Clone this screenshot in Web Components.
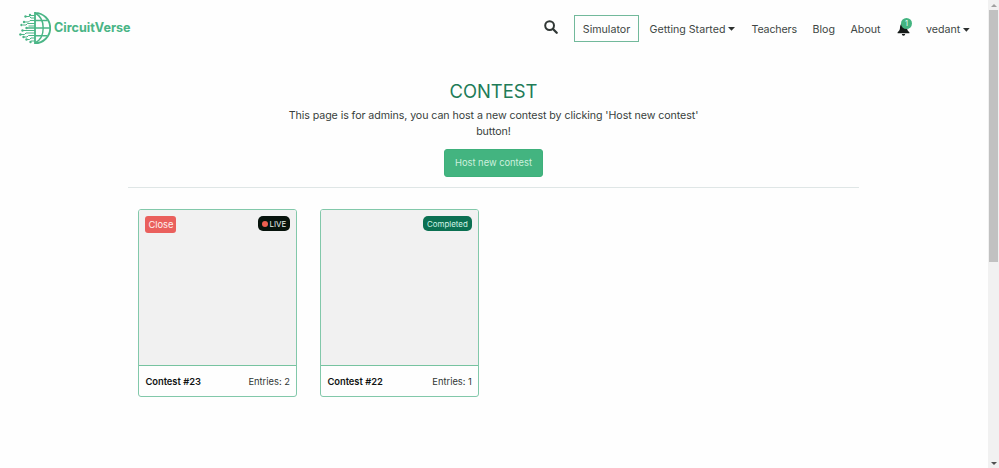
<!DOCTYPE html>
<html lang="en">
<head>
<meta charset="utf-8">
<title>CircuitVerse</title>
<style>
html,body{margin:0;height:100%;overflow:hidden}
body{background:#fefefe;color:#404644;font-family:Inter,"Liberation Sans",sans-serif}
</style>
</head>
<body>
<cv-app></cv-app>
<script>
const define = (name, html) => customElements.define(name, class extends HTMLElement {
  constructor() {
    super();
    const t = document.createElement('template');
    t.innerHTML = html;
    this.attachShadow({ mode: 'open' }).appendChild(t.content.cloneNode(true));
  }
});

define('cv-logo', `
<style>
:host{display:flex;align-items:center;gap:3px;color:#4ab586;font-weight:700;font-size:12.6px;line-height:16px;white-space:nowrap;padding-bottom:2px}
svg{display:block;flex:none}
</style>
<svg width="32" height="34" viewBox="0 0 32 34" fill="none" stroke="#4ab586" stroke-width="1.4">
  <path d="M16 1.8a15.2 15.2 0 0 1 0 30.4M16 1v32" stroke-width="1.8"/>
  <path d="M16 2c6 3 8.2 9 8.2 15s-2.200 12-8.200 15M15 9.500h13M8 17h23M15 24.800h13"/>
  <path d="M16 4.500h-4.500M16 7h-4l-1.500-1.500H7M16 9.500h-5L9.500 11H5.500M16 12.500H8.500l-1.500 1.500H4M16 15H9.500M16 19.500H4M16 22H7l-1.500 1.500H1.500M16 24.500H9.500L8 26H5M16 27h-4l-1.500 1.500H8M16 30h-4" stroke-width="1"/>
  <g fill="#4ab586" stroke="none"><circle cx="11" cy="4" r="1.200"/><circle cx="6.500" cy="5.500" r="1.200"/><circle cx="5" cy="11" r="1.200"/><circle cx="2.500" cy="14" r="1.200"/><circle cx="7.500" cy="17" r="1.200"/><circle cx="3.500" cy="19.500" r="1.200"/><circle cx="1.400" cy="23.500" r="1.200"/><circle cx="4.500" cy="26" r="1.200"/><circle cx="7.500" cy="28.500" r="1.200"/><circle cx="11.500" cy="31" r="1.200"/></g>
</svg><span>CircuitVerse</span>`);

define('cv-link', `
<style>
:host{display:flex;align-items:center;gap:3px;box-sizing:border-box;height:27px;padding-top:3px;font-size:10.67px;line-height:16px;white-space:nowrap}
:host([boxed]){border:1px solid #72b99b;padding:3px 8px 0;justify-content:center}
svg{display:none}
:host([caret]) svg{display:block;margin-bottom:var(--caret-lift,2px)}
</style>
<slot></slot><svg width="7" height="4" viewBox="0 0 7 4" fill="#2c302f"><path d="M0 0h7L3.500 3.800Z"/></svg>`);

define('cv-bell', `
<style>
:host{display:block;position:relative;width:13px;height:14px}
svg{display:block}
b{position:absolute;left:4px;top:-4px;width:11px;height:11px;border-radius:50%;background:#43b480;color:#e8fff4;font-size:7.500px;font-weight:400;line-height:11px;text-align:center}
</style>
<svg width="13" height="14" viewBox="0 0 13 14" fill="#151a18"><path d="M6.500 1C4 1.500 3 3.200 3 5.500 3 8 2.200 9 .6 10.200V11.300h11.800v-1.100C10.800 9 10 8 10 5.500 10 3.200 9 1.500 6.500 1ZM4.800 12a1.700 1.700 0 0 0 3.400 0Z"/></svg><b>1</b>`);

define('cv-navbar', `
<style>
:host{display:flex;align-items:center;justify-content:space-between;height:57px;padding:0 18px 0 19px}
nav{display:grid;grid-template-columns:30px 75.500px 102px 61px 38px 46.500px 29px 44px;align-items:center}
cv-link[boxed]{width:65px}
.l{letter-spacing:-.14px}
.u{--caret-lift:0px}
.s{display:block;margin-bottom:3px}
</style>
<cv-logo></cv-logo>
<nav>
<svg class="s" width="14" height="14" viewBox="0 0 14 14" fill="none" stroke="#303735" stroke-linecap="round"><circle cx="5.600" cy="5.600" r="4.400" stroke-width="2"/><path d="m9.200 9.200 3.500 3.500" stroke-width="2.300"/></svg>
<cv-link boxed>Simulator</cv-link><cv-link caret>Getting Started</cv-link><cv-link class="l">Teachers</cv-link><cv-link>Blog</cv-link><cv-link>About</cv-link><cv-bell></cv-bell><cv-link class="u" caret>vedant</cv-link>
</nav>`);

define('cv-hero', `
<style>
:host{display:flex;flex-direction:column;align-items:center;box-sizing:border-box;width:731px;height:131px;padding-top:23px;border-bottom:1px solid #dfe6e6;text-align:center}
h1{margin:0;font-size:18.400px;line-height:22px;font-weight:400;color:#217b57}
p{margin:6px 0 0;width:430px;font-size:10.670px;line-height:16px;letter-spacing:-.075px;color:#383e3c}
button{margin:9px 0 0;box-sizing:border-box;width:99px;height:28px;padding:0 0 1px;border:1px solid #3eb07b;border-radius:3px;background:#43b480;color:#cdf0de;font:400 9.330px/16px Inter,"Liberation Sans",sans-serif;white-space:nowrap}
</style>
<h1>CONTEST</h1>
<p>This page is for admins, you can host a new contest by clicking 'Host new contest'<br>button!</p>
<button>Host new contest</button>`);

define('cv-card', `
<style>
:host{display:flex;flex-direction:column;box-sizing:border-box;width:159px;height:188px;border:1px solid #82c8aa;border-radius:3px;overflow:hidden;background:#fefefe}
.p{display:flex;justify-content:space-between;align-items:flex-start;height:156px;padding:6px 6px 0;box-sizing:border-box;background:#f1f1f1;border-bottom:1px solid #76c3a0}
.f{display:flex;flex:1;align-items:center;justify-content:space-between;padding:1px 6px 0;font-size:9.330px;line-height:14px;color:#303634;white-space:nowrap}
.t{font-weight:600;color:#101413}
</style>
<div class="p"><slot name="action"><span></span></slot><slot name="status"></slot></div>
<div class="f"><span class="t"><slot name="title"></slot></span><span><slot name="entries"></slot></span></div>`);

define('cv-tag', `
<style>
:host{display:flex;align-items:center;justify-content:center;box-sizing:border-box;width:49px;height:15px;border-radius:5px;background:#0b7052;color:#d3f5e7;font-size:7.900px;line-height:14px;white-space:nowrap}
:host([kind=live]){width:32px;background:#07130c;color:#e4eee8;gap:2px}
:host([kind=close]){width:31px;height:17px;border-radius:3px;background:#ea605d;color:#fff0ef;font-size:9.330px}
i{display:none;width:6px;height:6px;border-radius:50%;background:#ec5f50}
:host([kind=live]) i{display:block}
</style>
<i></i><slot></slot>`);

define('cv-scrollbar', `
<style>
:host{display:flex;flex-direction:column;align-items:center;box-sizing:border-box;width:11px;height:468px;background:#f1f1f1}
.u,.d{height:10px;display:flex;align-items:center}
.u i{border:3px solid transparent;border-bottom-color:#a0a0a0;border-top:0}
.d{margin-top:auto}
.d i{border:3px solid transparent;border-top-color:#505050;border-bottom:0}
.h{width:9px;height:252px;background:#c1c1c1}
</style>
<div class="u"><i></i></div><div class="h"></div><div class="d"><i></i></div>`);

define('cv-app', `
<style>
:host{display:grid;grid-template-columns:1fr 11px;height:468px}
.c{width:731px;margin-left:128px}
.g{display:flex;gap:23.500px;margin-top:21px;padding-left:10.400px}
cv-card{width:158.500px}
</style>
<main>
<cv-navbar></cv-navbar>
<div class="c">
<cv-hero></cv-hero>
<div class="g">
<cv-card><cv-tag slot="action" kind="close">Close</cv-tag><cv-tag slot="status" kind="live">LIVE</cv-tag><span slot="title">Contest #23</span><span slot="entries">Entries: 2</span></cv-card>
<cv-card><cv-tag slot="status">Completed</cv-tag><span slot="title">Contest #22</span><span slot="entries">Entries: 1</span></cv-card>
</div>
</div>
</main>
<cv-scrollbar></cv-scrollbar>`);
</script>
</body>
</html>
